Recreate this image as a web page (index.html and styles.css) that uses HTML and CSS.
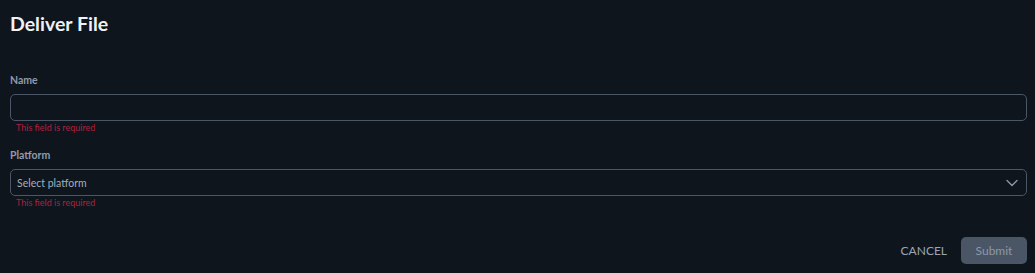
FILE: index.html
```html
<!DOCTYPE html>
<html>
<head>
<meta charset="utf-8">
<link rel="stylesheet" href="styles.css">
</head>
<body>
<div class="dialog">
  <h1 class="title">Deliver File</h1>
  <form class="form">
    <div class="field">
      <label class="label">Name</label>
      <div class="input"></div>
      <div class="error">This field is required</div>
    </div>
    <div class="field">
      <label class="label">Platform</label>
      <div class="input select">
        <span class="placeholder">Select platform</span>
        <svg class="chev" width="12" height="8" viewBox="0 0 12 8"><path d="M1 1.5 L6 6.5 L11 1.5" fill="none" stroke="#8d99a8" stroke-width="1.3" stroke-linecap="round" stroke-linejoin="round"/></svg>
      </div>
      <div class="error">This field is required</div>
    </div>
    <div class="actions">
      <button type="button" class="btn-text">CANCEL</button>
      <button type="button" class="btn-submit">Submit</button>
    </div>
  </form>
</div>
</body>
</html>
```
FILE: styles.css
```css
html, body {
  margin: 0;
  padding: 0;
  background: #0f151d;
  font-family: "Lato", "Noto Sans", sans-serif;
}
.dialog {
  padding: 12px 8px 9px 10px;
}
.title {
  margin: 0;
  font-size: 19.5px;
  font-weight: 700;
  color: #eef1f5;
  line-height: 24px;
}
.form {
  margin-top: 37px;
}
.field {
  display: flex;
  flex-direction: column;
  margin-bottom: 14px;
}
.label {
  font-size: 10.5px;
  font-weight: 700;
  color: #8f9aaa;
  line-height: 14px;
  margin-bottom: 7px;
}
.input {
  height: 25px;
  border: 1px solid #4b5667;
  border-radius: 5px;
  box-sizing: content-box;
}
.select {
  display: flex;
  align-items: center;
  justify-content: space-between;
  padding: 0 8px 0 6px;
}
.placeholder {
  font-size: 10.5px;
  color: #a3aebc;
}
.error {
  font-size: 9px;
  color: #b0203f;
  line-height: 12px;
  margin-top: 1px;
  padding-left: 6px;
}
.actions {
  display: flex;
  justify-content: flex-end;
  align-items: center;
  gap: 14px;
  margin-top: 28px;
}
.btn-text {
  background: none;
  border: none;
  color: #9aa6b5;
  font-family: inherit;
  font-size: 12px;
  padding: 0;
}
.btn-submit {
  background: #4a5566;
  border: none;
  border-radius: 5px;
  color: #8d99a8;
  font-family: inherit;
  font-size: 12px;
  width: 66px;
  height: 27px;
}
```
